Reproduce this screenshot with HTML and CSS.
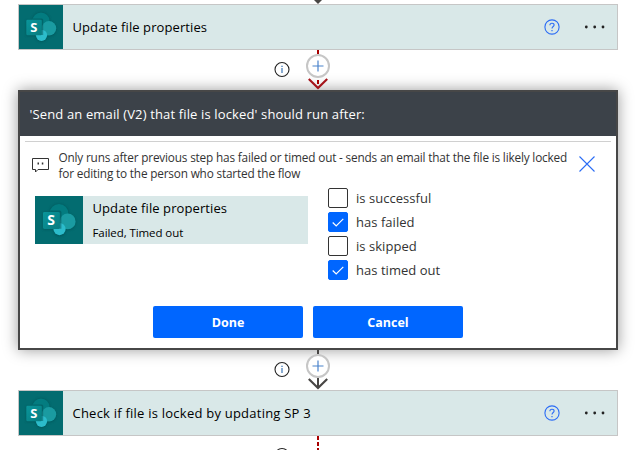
FILE: index.html
```
<!DOCTYPE html>
<html lang="en">
<head>
<meta charset="utf-8">
<title>Flow designer</title>
<link rel="stylesheet" href="styles.css">
</head>
<body>
<svg class="defs" width="0" height="0">
  <defs>
    <filter id="soft" x="-30%" y="-30%" width="160%" height="160%"><feGaussianBlur stdDeviation="1.2"/></filter>
    <linearGradient id="tile" x1="0" y1="0" x2="1" y2="1"><stop offset="0" stop-color="#0a969b"/><stop offset="1" stop-color="#077c80"/></linearGradient>
    <symbol id="sharepoint" viewBox="0 0 44 44">
      <g fill="#024f52" opacity=".6" filter="url(#soft)">
        <circle cx="22" cy="16" r="9"/><circle cx="30" cy="24" r="7.5"/><circle cx="22.5" cy="31" r="6"/><rect x="7" y="15" width="16" height="16" rx="1.5"/>
      </g>
      <circle cx="22" cy="16" r="8.6" fill="#037c80"/>
      <circle cx="30" cy="23.3" r="7.2" fill="#1a9ba1"/>
      <circle cx="22.5" cy="30.3" r="5.6" fill="#2cbccb"/>
      <path d="M14 13.4h8.6a1.6 1.6 0 0 1 1.6 1.6v15H14z" fill="#034b50" opacity=".45"/>
      <rect x="7.3" y="14.7" width="15.5" height="15.5" rx="1.3" fill="url(#tile)"/>
    </symbol>
    <symbol id="info" viewBox="0 0 16 16">
      <circle cx="8" cy="8" r="7" fill="none" stroke="#222" stroke-width="1.1"/>
      <path d="M8 6.6v5" stroke="#3b75b5" stroke-width="1.2"/><path d="M8 4.2v1.3" stroke="#3b75b5" stroke-width="1.3"/>
    </symbol>
    <symbol id="help" viewBox="0 0 16 16">
      <circle cx="8" cy="8" r="7.1" fill="none" stroke="#2b6cf5" stroke-width="1.1"/>
      <path d="M5.9 6.2C5.9 4.9 6.8 4.2 8 4.2s2.1.7 2.1 1.8C10.1 7.5 8 7.6 8 9.6" fill="none" stroke="#2b6cf5" stroke-width="1.1"/>
      <path d="M8 11v1.3" stroke="#2b6cf5" stroke-width="1.2"/>
    </symbol>
    <symbol id="plus" viewBox="0 0 24 24">
      <circle cx="12" cy="12" r="11" fill="#fff" stroke="#c6c6c6" stroke-width="2"/>
      <path d="M6.5 12h11M12 6.500v11" stroke="#4a83cc" stroke-width="1.2"/>
    </symbol>
  </defs>
</svg>

<main class="flow">
  <svg class="stub" width="600" height="4"><path d="M296 0h8l-4 4z" fill="#484644"/></svg>

  <section class="card">
    <div class="logo"><svg width="44" height="44"><use href="#sharepoint"/></svg><b class="letter">S</b></div>
    <span class="title t-update">Update file properties</span>
    <svg class="help" width="16" height="16"><use href="#help"/></svg>
    <svg class="more" width="22" height="4"><circle cx="2.3" cy="2" r="1.4"/><circle cx="10.700" cy="2" r="1.4"/><circle cx="19" cy="2" r="1.4"/></svg>
  </section>

  <svg class="connector" width="600" height="40">
    <path d="M300 0v4M300 30v4" stroke="#a80000" stroke-width="2"/>
    <path d="M290.800 29l9.200 9 9.200-9" fill="none" stroke="#a4141a" stroke-width="2.2"/>
    <use href="#plus" x="288" y="4" width="24" height="24"/>
    <use href="#info" x="256" y="11.5" width="16" height="16"/>
  </svg>

  <section class="dialog">
    <h1 class="heading"><span class="t-head">'Send an email (V2) that file is locked' should run after:</span></h1>
    <div class="content">
      <div class="comment">
        <svg class="bubble" width="17" height="15" fill="none" stroke="#333"><path d="M.5.5h16v11H6l-2.500 2.500v-2.500h-3z"/><path d="M5.500 5.500h1.500M9.800 5.500h1.500" stroke-width="2"/></svg>
        <p class="note">Only runs after previous step has failed or timed out - sends an email that the file is likely locked<br>for editing to the person who started the flow</p>
        <svg class="close" width="16" height="16"><path d="M.5.5l15 15M15.500.5l-15 15" stroke="#2b6cf5" stroke-width="1.1"/></svg>
      </div>
      <div class="choices">
        <div class="previous">
          <div class="logo big"><svg width="48" height="48"><use href="#sharepoint"/></svg><b class="letter">S</b></div>
          <div class="summary"><div class="t-update">Update file properties</div><div class="status">Failed, Timed out</div></div>
        </div>
        <div class="checks">
          <div class="check"><i class="box"></i><span>is successful</span></div>
          <div class="check"><i class="box on"><svg width="12" height="9"><path d="M.7 4.500l3.500 3.500L11.300.9"/></svg></i><span>has failed</span></div>
          <div class="check"><i class="box"></i><span>is skipped</span></div>
          <div class="check"><i class="box on"><svg width="12" height="9"><path d="M.7 4.500l3.500 3.500L11.300.9"/></svg></i><span>has timed out</span></div>
        </div>
      </div>
      <div class="actions"><button class="btn">Done</button><button class="btn">Cancel</button></div>
    </div>
  </section>

  <svg class="connector" width="600" height="40">
    <path d="M300 0v4M300 28v10" stroke="#484644" stroke-width="2"/>
    <path d="M290.800 29l9.200 9 9.200-9" fill="none" stroke="#484644" stroke-width="2.2"/>
    <use href="#plus" x="288" y="4" width="24" height="24"/>
    <use href="#info" x="256" y="11.5" width="16" height="16"/>
  </svg>

  <section class="card">
    <div class="logo"><svg width="44" height="44"><use href="#sharepoint"/></svg><b class="letter">S</b></div>
    <span class="title t-check">Check if file is locked by updating SP 3</span>
    <svg class="help" width="16" height="16"><use href="#help"/></svg>
    <svg class="more" width="22" height="4"><circle cx="2.3" cy="2" r="1.4"/><circle cx="10.700" cy="2" r="1.4"/><circle cx="19" cy="2" r="1.4"/></svg>
  </section>

  <svg class="connector" width="600" height="14">
    <path d="M300 0v14" stroke="#a80000" stroke-width="2" stroke-dasharray="4 2"/>
    <use href="#info" x="256" y="11.5" width="16" height="16"/>
  </svg>
</main>
</body>
</html>
```
FILE: styles.css
```
* { box-sizing: border-box; }
body { margin: 0; height: 450px; overflow: hidden; background: #fff; color: #000; font: 13px "Open Sans", "Noto Sans", sans-serif; }
.defs { position: absolute; }
.flow { width: 600px; margin-left: 18px; display: flex; flex-direction: column; }
.flow svg { display: block; flex: none; }
.connector { position: relative; }
.card { height: 46px; flex: none; border: 1px solid #c6c6c6; background: #d9e8e8; display: flex; align-items: center; }
.logo { width: 44px; height: 44px; flex: none; background: #036c70; display: grid; }
.logo > * { grid-area: 1 / 1; }
.letter { padding: 14px 0 0 11.2px; font-size: 13px; line-height: 16px; color: #fff; }
.logo.big { width: 48px; height: 48px; }
.big .letter { padding: 16px 0 0 12.2px; font-size: 14px; }
.title { margin-left: 9.5px; flex: 1; line-height: 18px; white-space: nowrap; }
.t-update { letter-spacing: .09px; }
.t-check { letter-spacing: .23px; }
.t-head { letter-spacing: .14px; }
.help { margin-right: 24px; }
.more { margin-right: 11px; fill: #222; }
.dialog { height: 260px; flex: none; border: 2px solid #474747; background: #fff; box-shadow: 0 0 14px rgba(0, 0, 0, .4); }
.heading { margin: 0; height: 44px; padding-left: 9.5px; display: flex; align-items: center; background: #3c4249; color: #fff; font-size: 13px; font-weight: 400; white-space: nowrap; }
.content { margin: 5px 5px 0; border-top: 1px solid #d0d0d0; }
.comment { height: 54px; padding: 7px 0 0 7px; display: flex; }
.bubble { margin-top: 9px; }
.note { margin: 0 0 0 9.5px; width: 520.5px; font-size: 11.8px; line-height: 16px; letter-spacing: -.18px; color: #333; white-space: nowrap; }
.close { margin-top: 7px; }
.choices { display: flex; padding-left: 10px; }
.previous { width: 273px; height: 48px; display: flex; background: #d9e8e8; }
.summary { padding: 3px 0 0 9.5px; line-height: 19px; white-space: nowrap; }
.status { margin-top: 5px; font-size: 11.5px; letter-spacing: -.08px; }
.checks { margin: -8px 0 0 20px; }
.check { height: 24px; display: flex; gap: 8px; color: #333; white-space: nowrap; letter-spacing: .04px; }
.check span { line-height: 20px; }
.box { width: 20px; height: 20px; border: 1px solid #333; border-radius: 2px; display: flex; align-items: center; justify-content: center; }
.box.on { background: #06f; border-color: #06f; }
.box path { fill: none; stroke: #fff; stroke-width: 1.2; }
.actions { display: flex; gap: 10px; margin: 22px 0 0 128px; }
.btn { width: 150px; height: 32px; padding: 0; border: 0; border-radius: 2px; background: #06f; color: #fff; font: 700 12.5px "Open Sans", sans-serif; }
```
